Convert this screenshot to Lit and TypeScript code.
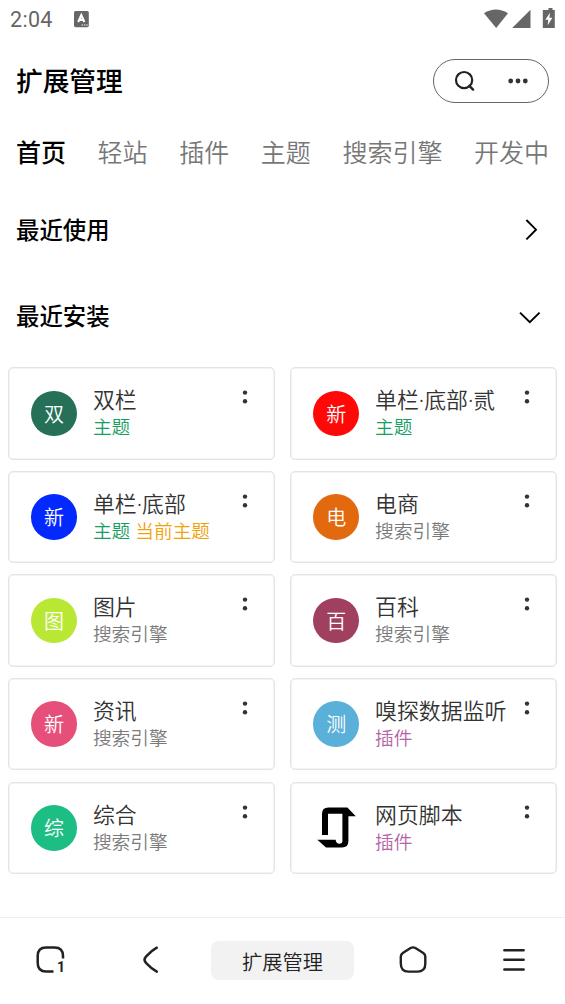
import { LitElement, html, svg, css, nothing } from "lit";
import { customElement, property } from "lit/decorators.js";

type Tag = { text: string; tone: string };
type Item = { name: string; glyph?: string; color?: string; tags: Tag[] };

const theme: Tag = { text: "主题", tone: "theme" };
const current: Tag = { text: "当前主题", tone: "current" };
const engine: Tag = { text: "搜索引擎", tone: "engine" };
const plugin: Tag = { text: "插件", tone: "plugin" };

const items: Item[] = [
  { name: "双栏", glyph: "双", color: "#267058", tags: [theme] },
  { name: "单栏·底部·贰", glyph: "新", color: "#ff0808", tags: [theme] },
  { name: "单栏·底部", glyph: "新", color: "#0329ff", tags: [theme, current] },
  { name: "电商", glyph: "电", color: "#e2690d", tags: [engine] },
  { name: "图片", glyph: "图", color: "#b8e834", tags: [engine] },
  { name: "百科", glyph: "百", color: "#a13f5e", tags: [engine] },
  { name: "资讯", glyph: "新", color: "#e64f7a", tags: [engine] },
  { name: "嗅探数据监听", glyph: "测", color: "#5ab0d8", tags: [plugin] },
  { name: "综合", glyph: "综", color: "#1dbe84", tags: [engine] },
  { name: "网页脚本", tags: [plugin] },
];

const tabs = ["首页", "轻站", "插件", "主题", "搜索引擎", "开发中"];

const scriptIcon = svg`
  <path d="M9 33V12Q9 5.6 15.5 5.6H34.4L42.8 14.2H35.4V39Q35.4 45.5 29 45.5H13L4.3 37.8H22.6Q23.2 41.8 26.4 41.8Q29.4 41.8 29.4 39V11.8H15V33Z" fill="#000"/>`;

@customElement("ext-card")
class ExtCard extends LitElement {
  @property({ attribute: false }) item!: Item;

  static styles = css`
    :host {
      display: flex;
      box-sizing: border-box;
      border: 1px solid #e4e4e4;
      box-shadow: inset 0 0 0 0.5px #e9e9e9;
      border-radius: 5px;
      padding: 0 0 0 22.3px;
      min-width: 0;
      align-items: flex-start;
    }
    .avatar {
      width: 45.6px;
      height: 45.6px;
      flex: none;
      margin-top: 22.4px;
      border-radius: 50%;
      color: #fff;
      font-size: 20px;
      line-height: 46px;
      text-align: center;
    }
    .script {
      width: 46px;
      height: 52px;
      flex: none;
      margin-top: 19px;
    }
    .body {
      flex: 1;
      margin: 16px 0 0 16px;
      white-space: nowrap;
      min-width: 0;
    }
    .script + .body { margin-left: 15.6px; }
    .name {
      font-family: "Noto Sans", "Noto Sans CJK SC", sans-serif;
      font-size: 21.9px;
      line-height: 32px;
      height: 28px;
      color: #333;
    }
    .tags {
      display: flex;
      gap: 5px;
      font-size: 18.7px;
      line-height: 27px;
    }
    .theme { color: #17a062; }
    .current { color: #f2a20c; }
    .engine { color: #7a7a7a; }
    .plugin { color: #b565a7; }
    .more {
      width: 6px;
      height: 16px;
      flex: none;
      margin: 21px 26px 0 0;
    }
  `;

  render() {
    const it = this.item;
    return html`
      ${it.glyph
        ? html`<div class="avatar" style="background:${it.color}">${it.glyph}</div>`
        : html`<svg class="script" viewBox="0 0 46 52">${scriptIcon}</svg>`}
      <div class="body">
        <div class="name">${it.name}</div>
        <div class="tags">${it.tags.map((t) => html`<span class=${t.tone}>${t.text}</span>`)}</div>
      </div>
      <svg class="more" viewBox="0 0 6 16">
        <circle cx="3" cy="3.6" r="2.2" fill="#333" />
        <circle cx="3" cy="12.2" r="2.2" fill="#333" />
      </svg>
    `;
  }
}

@customElement("app-root")
class AppRoot extends LitElement {
  static styles = css`
    :host {
      display: flex;
      flex-direction: column;
      box-sizing: border-box;
      width: 100%;
      height: 1004px;
      overflow: hidden;
      background: #fff;
      font-family: "Noto Sans CJK SC", sans-serif;
      font-weight: 350;
      color: #000;
    }
    svg { display: block; }
    .status {
      display: flex;
      align-items: center;
      height: 38px;
      padding: 0 9px 0 10px;
      color: #666;
      flex: none;
    }
    .time {
      font: 400 21.5px/38px Roboto, sans-serif;
      letter-spacing: 0.3px;
      width: 64px;
      padding-top: 1px;
    }
    .sysicons { margin-left: auto; }
    .header {
      display: flex;
      align-items: center;
      justify-content: space-between;
      height: 85px;
      padding: 0 16px;
      flex: none;
    }
    .title { font-size: 26.7px; font-weight: 500; line-height: 40px; padding-bottom: 2px; }
    .pill {
      display: flex;
      align-items: center;
      box-sizing: border-box;
      width: 116px;
      height: 44px;
      border: 1px solid #666;
      border-radius: 22px;
    }
    .tabs {
      display: flex;
      gap: 31.6px;
      padding: 0 16px;
      height: 56px;
      line-height: 56px;
      font-size: 25px;
      color: #777;
      white-space: nowrap;
      flex: none;
    }
    .active { color: #000; font-weight: 500; }
    .section {
      display: flex;
      align-items: center;
      justify-content: space-between;
      height: 86.5px;
      padding: 0 24px 0 16px;
      font-size: 23.4px;
      font-weight: 500;
      flex: none;
    }
    .first { margin-top: 7px; }
    .section:not(.first) span { padding-bottom: 1.5px; }
    .grid {
      display: grid;
      grid-template-columns: 1fr 1fr;
      grid-auto-rows: 92.5px;
      gap: 11.1px 15.4px;
      padding: 8.2px 8px 0;
      flex: 1;
    }
    .nav {
      display: flex;
      align-items: center;
      height: 87px;
      box-sizing: border-box;
      border-top: 1px solid #eee;
      padding-bottom: 1px;
      flex: none;
    }
    .slot { width: 100px; display: flex; justify-content: center; padding-bottom: 1.4px; }
    .slot.right { width: 101.6px; }
    .page {
      width: 143px;
      height: 39px;
      flex: none;
      margin: 0 auto 0 11px;
      border-radius: 8px;
      background: #f2f2f2;
      color: #222;
      font-size: 20.3px;
      line-height: 40px;
      text-align: center;
    }
    .count { font: 700 14px Roboto, sans-serif; }
  `;

  private nav() {
    return html`
      <nav class="nav">
        <div class="slot">
          <svg width="32" height="32" viewBox="0 0 32 32" fill="none" stroke="#222" stroke-width="2.5">
            <path d="M29 14.5V12Q29 3.5 20.5 3.5H12Q3.7 3.5 3.7 12V19Q3.7 27.5 12 27.5H19.5" />
            <text class="count" x="23" y="28" fill="#222" stroke="none">1</text>
          </svg>
        </div>
        <div class="slot">
          <svg width="32" height="32" viewBox="0 0 32 32" fill="none" stroke="#222" stroke-width="2.5" stroke-linecap="round">
            <path d="M22.8 3.7Q17 7 12.2 12.3Q9 15.7 12.2 19.1Q17 24.3 22.8 27.7" />
          </svg>
        </div>
        <div class="page">扩展管理</div>
        <div class="slot right">
          <svg width="32" height="32" viewBox="0 0 32 32" fill="none" stroke="#222" stroke-width="2.4" stroke-linejoin="round">
            <path d="M13.6 4Q16 2.7 18.4 4L26.3 8.9Q28.3 10.3 28.3 12.5V19.5Q28.3 27.6 20.5 27.6H11.5Q3.8 27.6 3.8 19.5V12.5Q3.8 10.3 5.8 8.9Z" />
          </svg>
        </div>
        <div class="slot right">
          <svg width="32" height="32" viewBox="0 0 32 32" stroke="#222" stroke-width="2.6" stroke-linecap="round">
            <path d="M6.4 6.3H25.6M6.4 15.8H25.6M6.4 25.5H25.6" />
          </svg>
        </div>
      </nav>
    `;
  }

  render() {
    return html`
      <div class="status">
        <span class="time">2:04</span>
        <svg width="16" height="18" viewBox="0 0 16 18">
          <rect x="0" y="1" width="14.8" height="16.2" rx="1.6" fill="#666" />
          <path d="M4.2 12L7.3 5L10.4 12M5.4 9.9H9.2" fill="none" stroke="#fff" stroke-width="2.1" />
          <path d="M7.6 15H9M10 15H11.4M12.4 15H13.8" stroke="#fff" stroke-width="1.2" />
        </svg>
        <svg class="sysicons" width="74" height="22" viewBox="0 0 74 22" fill="#666">
          <path d="M2 5.3Q13.8-2.2 26 5.3L14.2 20Z" />
          <path d="M48.5 1.8V20H30.2Z" />
          <path d="M63.8 2H66.5V0H70.5V2H72.8V20H60.8V2Z" />
          <path d="M68 4.8L63.3 11.8H66.2L65.7 17.2L70.4 9.8H67.4Z" fill="#fff" />
        </svg>
      </div>
      <header class="header">
        <div class="title">扩展管理</div>
        <div class="pill">
          <svg width="114" height="42" viewBox="0 0 114 42">
            <circle cx="30.1" cy="20.1" r="8.1" fill="none" stroke="#222" stroke-width="2.2" />
            <path d="M35.3 25.8L39.1 29.6" stroke="#222" stroke-width="2.4" stroke-linecap="round" />
            <circle cx="76.7" cy="21" r="2.4" fill="#333" />
            <circle cx="84" cy="21" r="2.4" fill="#333" />
            <circle cx="91.3" cy="21" r="2.4" fill="#333" />
          </svg>
        </div>
      </header>
      <div class="tabs">
        ${tabs.map((t, i) => html`<span class=${i === 0 ? "active" : nothing}>${t}</span>`)}
      </div>
      <div class="section first">
        <span>最近使用</span>
        <svg width="22" height="26" viewBox="0 0 22 26" fill="none" stroke="#000" stroke-width="1.9">
          <path d="M7.4 4L17 13.7L7.4 23.4" />
        </svg>
      </div>
      <div class="section">
        <span>最近安装</span>
        <svg width="24" height="24" viewBox="0 0 24 24" fill="none" stroke="#000" stroke-width="1.9">
          <path d="M3 8.6L12.8 18.2L22.6 8.6" />
        </svg>
      </div>
      <div class="grid">${items.map((it) => html`<ext-card .item=${it}></ext-card>`)}</div>
      ${this.nav()}
    `;
  }
}
